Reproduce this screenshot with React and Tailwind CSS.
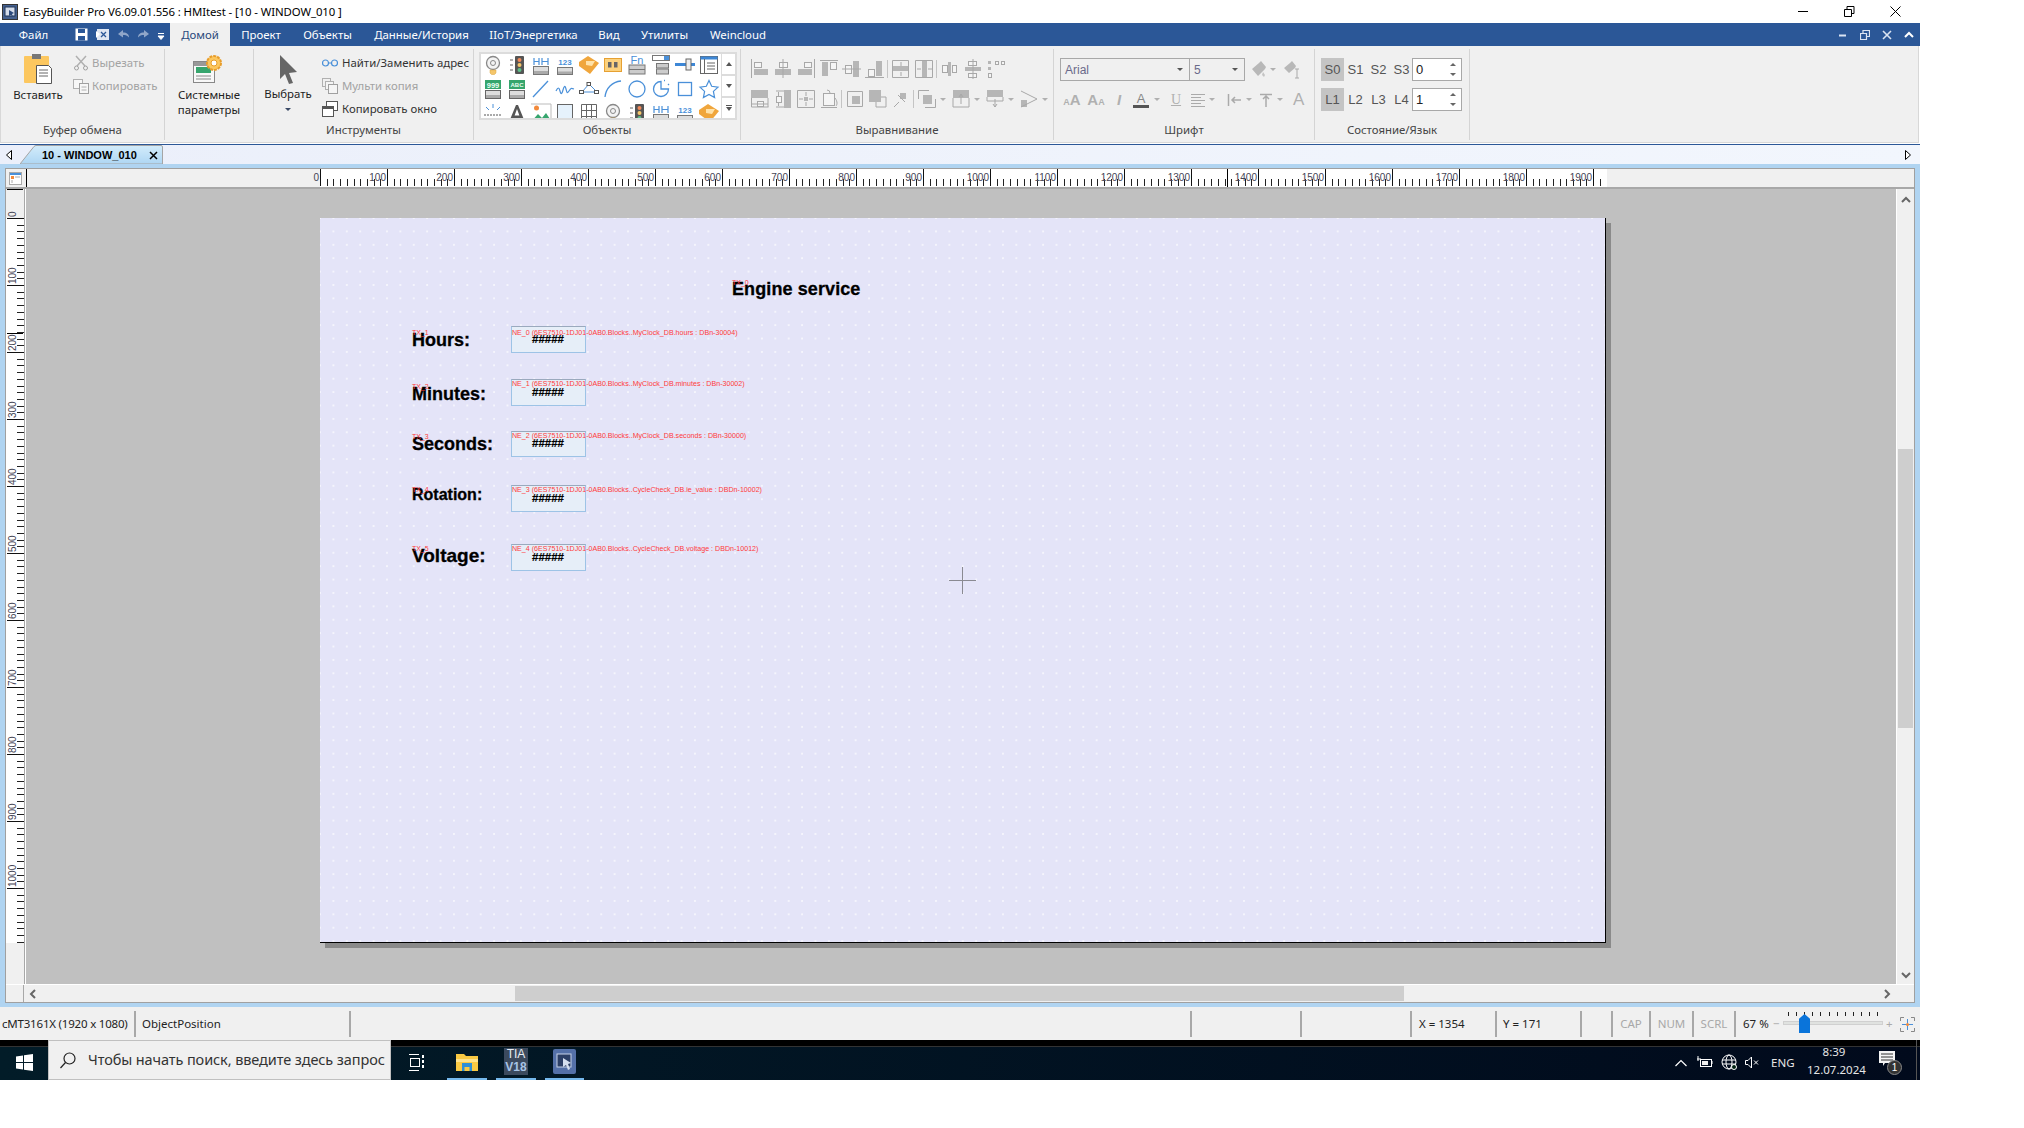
import React from "react";

const UI = "font-['Noto_Sans','Open_Sans',sans-serif]";
const G = "#b6b6b6";
const S = "#a8a8a8";
const B = "#4a90d9";

function Sv({ w = 20, h = 20, vb, className = "", children }) {
  return (
    <svg width={w} height={h} viewBox={vb || `0 0 ${w} ${h}`} className={"shrink-0 " + className} fill="none">
      {children}
    </svg>
  );
}

function Btn({ t, c = "#4a90d9" }) {
  return (
    <>
      <rect x="4.5" y="14.5" width="15" height="7" fill="#ddd" stroke="#777" />
      <rect x="5" y="18.5" width="14" height="2.5" fill="#aaa" />
      <text x="12" y="12" textAnchor="middle" fontSize="8" fontWeight="700" fontFamily="Liberation Sans" fill={c}>{t}</text>
    </>
  );
}
const Ico = {
  bulb: () => (<>
    <circle cx="12" cy="10" r="6.5" fill="#f3f3f3" stroke="#888" strokeWidth="1.3" />
    <circle cx="12" cy="10" r="2.5" stroke="#888" />
    <path d="M9 17h6v3l-1.5 1.5h-3L9 20z" fill="#f5c66b" stroke="#d9a441" strokeWidth=".5" />
  </>),
  light: () => (<>
    <rect x="10" y="3" width="9" height="18" rx="1" fill="#555" />
    <circle cx="14.5" cy="7" r="2" fill="#f28a5a" /><circle cx="14.5" cy="12" r="2" fill="#f5c66b" /><circle cx="14.5" cy="17" r="2" fill="#5fbf8a" />
    <path d="M5 7h3M5 12h3M5 17h3" stroke="#666" />
  </>),
  num: () => (<>
    <path d="M5 5v7M10 5v7M5 8.5h5M13 5v7M19 5v7M13 8.5h6" stroke={B} strokeWidth="1.2" />
    <rect x="4.5" y="13.5" width="15" height="8" fill="#ddd" stroke="#777" /><rect x="5" y="18" width="14" height="3" fill="#aaa" />
  </>),
  n123: () => <Btn t="123" />,
  tag: () => (<>
    <path d="M2 9l9-6 11 7-9 11-11-8z" fill="#f0a63c" /><path d="M9 8l9 0-3 5-6-1z" fill="#ffe2a8" />
  </>),
  yellow: () => (<>
    <rect x="3.5" y="5.5" width="17" height="13" fill="#fcd27e" stroke="#e6a032" />
    <rect x="7" y="9" width="3.5" height="5.5" fill="#666" /><rect x="13" y="9" width="3.5" height="5.5" fill="#666" />
  </>),
  fn: () => (<>
    <text x="12" y="11" textAnchor="middle" fontSize="11" fontFamily="Liberation Sans" fill={B}>Fn</text>
    <rect x="4" y="12" width="16" height="9" fill="#ccc" stroke="#777" /><path d="M4 16.5h16" stroke="#777" />
  </>),
  combo: () => (<>
    <rect x="3.5" y="2.5" width="17" height="5" fill="#fff" stroke="#777" /><rect x="15" y="3" width="5" height="4" fill={B} />
    <rect x="7.5" y="10.5" width="12" height="4.5" fill="#ccc" stroke="#777" /><rect x="7.5" y="16" width="12" height="5" fill="#ccc" stroke="#777" />
  </>),
  slider: () => (<>
    <rect x="2" y="10" width="20" height="3" fill="#3d87d6" /><rect x="13" y="6" width="5" height="11" fill="#eee" stroke="#666" />
  </>),
  table: () => (<>
    <rect x="3.5" y="3.5" width="17" height="17" fill="#fff" stroke="#666" /><rect x="3.5" y="3.5" width="17" height="3" fill="#3d87d6" />
    <path d="M7.5 6v15M10 10h8M10 13h8M10 16h8" stroke="#666" />
  </>),
  g999: () => (<>
    <rect x="4" y="3" width="16" height="9" fill="#36a56d" />
    <text x="12" y="10.5" textAnchor="middle" fontSize="7.5" fontWeight="700" fontFamily="Liberation Sans" fill="#e8fff2">999</text>
    <rect x="4.5" y="13.5" width="15" height="8" fill="#ddd" stroke="#666" /><rect x="5" y="18" width="14" height="3" fill="#aaa" />
  </>),
  gabc: () => (<>
    <rect x="4" y="3" width="16" height="9" fill="#36a56d" />
    <text x="12" y="10" textAnchor="middle" fontSize="6" fontWeight="700" fontFamily="Liberation Sans" fill="#e8fff2">ABC</text>
    <rect x="4.5" y="13.5" width="15" height="8" fill="#ddd" stroke="#666" /><rect x="5" y="18" width="14" height="3" fill="#aaa" />
  </>),
  line: () => <path d="M4 20L19 4" stroke={B} strokeWidth="1.3" />,
  wave: () => <path d="M3 14c2-4 3-4 4 0s2 3 3-1 2-5 3-1 1 5 3 2 2-3 5-2" stroke={B} strokeWidth="1.2" />,
  poly: () => (<>
    <path d="M5 15L12 7l8 8H5" stroke={B} /><rect x="2.5" y="13.5" width="4" height="3" fill="#fff" stroke="#555" /><rect x="10" y="5.5" width="3.5" height="3" fill="#fff" stroke="#555" /><rect x="17.5" y="13.5" width="4" height="3" fill="#fff" stroke="#555" />
  </>),
  arc: () => <path d="M4 20C5 11 11 5 20 4" stroke={B} strokeWidth="1.3" />,
  circle: () => <circle cx="12" cy="12" r="8" stroke={B} strokeWidth="1.3" />,
  pie: () => <path d="M12 4.5a7.5 7.5 0 1 0 7.5 7.5H12zM15 3.5l1 0M19 7l1 1" stroke={B} strokeWidth="1.3" />,
  rect: () => <rect x="5.5" y="5.5" width="13" height="13" stroke={B} strokeWidth="1.3" />,
  star: () => <path d="M12 3.5l2.7 5.8 6.3.8-4.6 4.3 1.2 6.2L12 17.5l-5.6 3.1 1.2-6.2L3 10.1l6.3-.8z" stroke={B} strokeWidth="1.2" />,
  spark: () => (<>
    <path d="M12 3v4M5 6l3 3M19 6l-3 3" stroke={B} /><path d="M3 14h18M4 17v3M8 17v3M12 17v3M16 17v3M20 17v3" stroke="#555" strokeDasharray="2 1" />
  </>),
  A: () => <path d="M4 21L11 4h2l7 17h-3l-1.6-4H8.6L7 21zM9.6 14.500h4.800L12 8z" fill="#555" />,
  pic: () => (<>
    <circle cx="7.500" cy="7" r="2.500" fill="#f28a3c" /><path d="M2 21l7-8 4 4 4-5 6 9z" fill="#36a56d" /><path d="M2 3h20v18" stroke="#bbb" />
  </>),
  pane: () => <rect x="4.500" y="3.500" width="15" height="18" fill="#e6f2fc" stroke="#666" />,
  grid: () => <path d="M4.500 3.500h15v18h-15zM4.500 9.500h15M4.500 15.500h15M9.500 3.500v18M14.500 3.500v18" stroke="#666" />,
};
const gallery = ["bulb","light","num","n123","tag","yellow","fn","combo","slider","table","g999","gabc","line","wave","poly","arc","circle","pie","rect","star","spark","A","pic","pane","grid","bulb","light","num","n123","tag"];

function Al({ f = [], o = [], l = [] }) {
  return (
    <Sv w={20} h={20}>
      {f.map((r, i) => <rect key={i} x={r[0]} y={r[1]} width={r[2]} height={r[3]} fill={G} />)}
      {o.map((r, i) => <rect key={i} x={r[0] + .5} y={r[1] + .5} width={r[2]} height={r[3]} stroke={S} fill="#f5f5f5" />)}
      {l.map((d, i) => <path key={i} d={d} stroke={S} />)}
    </Sv>
  );
}
const VSep = () => <span className="w-px h-[18px] bg-[#c4c4c4] -ml-[1px] shrink-0" />;
const Drop = ({ c = "#b0b0b0" }) => <span className="block w-0 h-0 border-x-[3px] border-x-transparent border-t-[3px] shrink-0" style={{ borderTopColor: c }} />;

function RulerH() {
  const minor = [], major = [];
  for (let i = 0; i < 192; i++) { const x = 295 + i * 6.7; (i % 10 === 0 ? major : minor).push(x); }
  return (
    <svg width="1889" height="18" className="shrink-0" viewBox="0 0 1889 18">
      <rect x="295" y="0" width="1287" height="18" fill="#fff" />
      <path d="M1.500 0v18" stroke="#000" />
      <path d="M1202.500 0v18" stroke="#000" />
      {minor.map((x) => <path key={x} d={`M${Math.round(x) + .5} 10v7`} stroke="#222" />)}
      {major.map((x, i) => (
        <g key={x}>
          <path d={`M${Math.round(x) + .5} 0v17`} stroke="#111" />
          <text x={Math.round(x) - 1} y="12" textAnchor="end" fontSize="10" fontFamily="Liberation Sans" fill="#445">{i * 100}</text>
        </g>
      ))}
    </svg>
  );
}
function RulerV() {
  const minor = [], major = [];
  for (let i = 0; i <= 108; i++) { const y = 29 + i * 6.7; (i % 10 === 0 ? major : minor).push(y); }
  return (
    <svg width="18" height="795" className="shrink-0" viewBox="0 0 18 795">
      <rect x="0" y="29" width="18" height="725" fill="#fff" />
      <path d="M1 0.500h16" stroke="#000" />
      <path d="M1 144.500h16" stroke="#000" />
      {minor.map((y) => <path key={y} d={`M11 ${Math.round(y) + .5}h7`} stroke="#222" />)}
      {major.map((y, i) => (
        <g key={y}>
          <path d={`M1 ${Math.round(y) + .5}h17`} stroke="#111" />
          <text transform={`translate(10 ${Math.round(y) - 1}) rotate(-90)`} fontSize="10" fontFamily="Liberation Sans" fill="#445">{i * 100}</text>
        </g>
      ))}
    </svg>
  );
}

function RibbonLabel({ children }) {
  return <div className="h-[20px] text-[11.4px] leading-[20px] text-center text-[#444]">{children}</div>;
}
function Group({ w, label, children }) {
  return (
    <div className={"flex flex-col shrink-0 border-r border-[#d4d4d4] h-[91px] mt-[3px] " + w}>
      <div className="flex-1 min-h-0">{children}</div>
      <RibbonLabel>{label}</RibbonLabel>
    </div>
  );
}

function StateRow({ items, val, top = "" }) {
  return (
    <div className={"flex items-center h-[23px] " + top}>
      {items.map((t, i) => (
        <span key={t} className={"w-[23px] h-[23px] flex items-center justify-center text-[13px] font-['Liberation_Sans'] text-[#555] " + (i === 0 ? "bg-[#c4c4c4]" : "")}>{t}</span>
      ))}
      <div className="ml-[-1px] w-[50px] h-[23px] border border-[#a8a8a8] bg-white flex items-center pl-[3px] text-[13px] font-['Liberation_Sans'] text-[#222] relative">
        {val}
        <span className="absolute right-[5px] top-[4px] w-0 h-0 border-x-[3px] border-x-transparent border-b-[3px] border-b-[#666]" />
        <span className="absolute right-[5px] bottom-[4px] w-0 h-0 border-x-[3px] border-x-transparent border-t-[3px] border-t-[#666]" />
      </div>
    </div>
  );
}

const rows = [
  { l: "Hours:", lc: "left-[92px] top-[111px] text-[18px]", tx: "TX_1", txc: "top-[111px]", box: "top-[108px] h-[27px]", ne: "top-[111px]", h: "top-[114px]", t: "NE_0 (6ES7510-1DJ01-0AB0.Blocks..MyClock_DB.hours : DBn-30004)" },
  { l: "Minutes:", lc: "left-[92px] top-[165px] text-[18px]", tx: "TX_2", txc: "top-[165px]", box: "top-[161px] h-[27px]", ne: "top-[162px]", h: "top-[167px]", t: "NE_1 (6ES7510-1DJ01-0AB0.Blocks..MyClock_DB.minutes : DBn-30002)" },
  { l: "Seconds:", lc: "left-[92px] top-[215px] text-[18px]", tx: "TX_3", txc: "top-[215px]", box: "top-[213px] h-[26px]", ne: "top-[214px]", h: "top-[218px]", t: "NE_2 (6ES7510-1DJ01-0AB0.Blocks..MyClock_DB.seconds : DBn-30000)" },
  { l: "Rotation:", lc: "left-[92px] top-[266px] text-[16px]", tx: "TX_4", txc: "top-[268px]", box: "top-[267px] h-[27px]", ne: "top-[268px]", h: "top-[273px]", t: "NE_3 (6ES7510-1DJ01-0AB0.Blocks..CycleCheck_DB.ie_value : DBDn-10002)" },
  { l: "Voltage:", lc: "left-[92px] top-[327px] text-[19px]", tx: "TX_5", txc: "top-[327px]", box: "top-[326px] h-[27px]", ne: "top-[327px]", h: "top-[332px]", t: "NE_4 (6ES7510-1DJ01-0AB0.Blocks..CycleCheck_DB.voltage : DBDn-10012)" },
];

export default function App() {
  return (
    <div className={"w-[2024px] h-[1128px] bg-white overflow-hidden " + UI}>
      <div className="w-[1920px] h-[1080px] flex flex-col">
        {/* title bar */}
        <div className="h-[23px] flex items-center bg-white shrink-0">
          <Sv w={16} h={16} className="ml-[2px]">
            <rect x=".5" y=".5" width="15" height="15" fill="#44608f" stroke="#333" />
            <rect x="3" y="3" width="10" height="9" fill="#d4dcea" stroke="#1f3458" />
            <path d="M7 6l5 3-2 1 1 3-2-2-2 1z" fill="#2b4a7d" />
          </Sv>
          <span className="ml-[5px] text-[11.4px] tracking-[-0.1px] text-black whitespace-nowrap">EasyBuilder Pro V6.09.01.556 : HMItest - [10 - WINDOW_010 ]</span>
          <div className="flex-1" />
          <Sv w={11} h={11} className="mr-[35px]"><path d="M0 5.500h10" stroke="#000" /></Sv>
          <Sv w={11} h={11} className="mr-[35px]"><path d="M.5 3.500h7v7h-7zM3 3.500V.5h7v7H7.500" stroke="#000" /></Sv>
          <Sv w={11} h={11} className="mr-[19px]"><path d="M.5.5l10 10M10.500.5l-10 10" stroke="#000" /></Sv>
        </div>

        {/* menu */}
        <div className="h-[23px] bg-[#2b5797] flex items-stretch text-[11.4px] text-white shrink-0">
          <div className="w-[67px] flex items-center justify-center">Файл</div>
          <div className="w-[103px] flex items-center pl-[8px] gap-[8px]">
            <Sv w={13} h={13}><path d="M.5.5h12v12H.5z" fill="#fff" /><rect x="3" y="1" width="7" height="4" fill="#2b5797" /><rect x="3" y="8" width="7" height="4.500" fill="#2b5797" /></Sv>
            <Sv w={13} h={13}><rect x="1" y="1" width="12" height="11" fill="#dfe6f2" /><path d="M5 4l5 5M10 4l-5 5" stroke="#2b5797" strokeWidth="1.300" /><path d="M0 3l4 3-4 4z" fill="#fff" /></Sv>
            <Sv w={13} h={13}><path d="M1 6l5-4v2.500c4 0 6 2 6 5-2-2-3-2.500-6-2.500V9.500z" fill="#8fa6c9" /></Sv>
            <Sv w={13} h={13} className="ml-[-1px]"><path d="M12 6L7 2v2.500c-4 0-6 2-6 5 2-2 3-2.500 6-2.500v2.500z" fill="#8fa6c9" /></Sv>
            <Sv w={8} h={9} className="mt-[3px] -ml-[1px]"><path d="M1 1.500h6M1 4l3 3.500L7 4z" stroke="#fff" fill="#fff" /></Sv>
          </div>
          <div className="w-[60px] bg-[#f0f0f0] text-[#2b4a7d] flex items-center justify-center">Домой</div>
          <div className="w-[62px] flex items-center justify-center">Проект</div>
          <div className="w-[71px] flex items-center justify-center">Объекты</div>
          <div className="w-[117px] flex items-center justify-center">Данные/История</div>
          <div className="w-[107px] flex items-center justify-center">IIoT/Энергетика</div>
          <div className="w-[44px] flex items-center justify-center">Вид</div>
          <div className="w-[67px] flex items-center justify-center">Утилиты</div>
          <div className="w-[80px] flex items-center justify-center">Weincloud</div>
          <div className="flex-1" />
          <div className="flex items-center gap-[12px] pr-[6px]">
            <Sv w={10} h={10}><path d="M1 5.500h7" stroke="#dbe4f2" strokeWidth="2" /></Sv>
            <Sv w={10} h={10}><path d="M.5 3.500h6v6h-6zM3 3V.5h6.500v6H7" stroke="#dbe4f2" strokeWidth="1.200" /></Sv>
            <Sv w={10} h={10}><path d="M1 1l8 8M9 1l-8 8" stroke="#dbe4f2" strokeWidth="1.600" /></Sv>
            <Sv w={10} h={10}><path d="M1 7l4-4 4 4" stroke="#fff" strokeWidth="2" /></Sv>
          </div>
        </div>

        {/* ribbon */}
        <div className="h-[97px] bg-[#f0f0f0] border border-[#d8d8d8] border-t-0 mr-[1px] flex text-[11.4px] shrink-0">
          <Group w="w-[164px]" label="Буфер обмена">
            <div className="flex">
              <div className="w-[74px] flex flex-col items-center pt-[4px]">
                <Sv w={30} h={32}>
                  <rect x="1" y="3" width="25" height="27" rx="1" fill="#fcc75f" />
                  <rect x="9" y="1" width="9" height="5" fill="#777" />
                  <path d="M13.500 12.500h12l3 3v15h-15z" fill="#fff" stroke="#555" />
                  <path d="M16 17h9M16 20h9M16 23h9" stroke="#666" />
                </Sv>
                <span className="mt-[2px] leading-[16px] text-[#222]">Вставить</span>
              </div>
              <div className="flex flex-col pt-[6px] gap-[7px] text-[#a3a3a3] -ml-[2px]">
                <div className="flex items-center h-[16px] gap-[3px]">
                  <Sv w={16} h={16}><path d="M3 1l9 10M13 1L4 11" stroke="#b0b0b0" strokeWidth="1.500" /><circle cx="3.500" cy="13" r="2" stroke="#a0a0a0" /><circle cx="12.500" cy="13" r="2" stroke="#a0a0a0" /></Sv>
                  <span>Вырезать</span>
                </div>
                <div className="flex items-center h-[16px] gap-[3px]">
                  <Sv w={16} h={16}><rect x=".5" y="1.500" width="9" height="9" fill="#f7f7f7" stroke="#b0b0b0" /><rect x="6.500" y="5.500" width="9" height="10" fill="#f7f7f7" stroke="#a0a0a0" /><path d="M8.500 9h5M8.500 12h5" stroke="#b0b0b0" /></Sv>
                  <span>Копировать</span>
                </div>
              </div>
            </div>
          </Group>
          <Group w="w-[89px]" label="">
            <div className="flex flex-col items-center pt-[4px]">
              <Sv w={32} h={32}>
                <rect x=".5" y="8.500" width="21" height="21" fill="#f8f8f8" stroke="#888" />
                <rect x="1" y="9" width="21" height="4" fill="#999" />
                <rect x="3" y="14" width="15" height="6" fill="#36a56d" />
                <path d="M3 23h15M3 26h15" stroke="#888" />
                <circle cx="21" cy="10" r="7" fill="#fcc75f" stroke="#e89d2a" strokeWidth="2" strokeDasharray="3 1" />
                <circle cx="21" cy="10" r="3" fill="#fff" stroke="#e89d2a" />
              </Sv>
              <span className="mt-[2px] leading-[15px] text-center text-[#222]">Системные<br />параметры</span>
            </div>
          </Group>
          <Group w="w-[220px]" label="Инструменты">
            <div className="flex">
              <div className="w-[68px] flex flex-col items-center pt-[5px]">
                <Sv w={20} h={31}><path d="M2 1l17 17-8 1 4 10-4 1-4-10-5 5z" fill="#666" /></Sv>
                <span className="mt-[1px] leading-[16px] text-[#222]">Выбрать</span>
                <span className="mt-[6px]"><Drop c="#3b4a66" /></span>
              </div>
              <div className="flex flex-col pt-[6px] gap-[7px] text-[#333] whitespace-nowrap">
                <div className="flex items-center h-[16px] gap-[4px]">
                  <Sv w={16} h={16}><circle cx="3.500" cy="8" r="3" stroke={B} strokeWidth="1.200" /><circle cx="12.500" cy="8" r="3" stroke={B} strokeWidth="1.200" /><path d="M6.500 8h3" stroke={B} /></Sv>
                  <span>Найти/Заменить адрес</span>
                </div>
                <div className="flex items-center h-[16px] gap-[4px] text-[#a3a3a3]">
                  <Sv w={16} h={16}><rect x=".5" y=".5" width="8" height="8" stroke="#b0b0b0" /><rect x="3.500" y="3.500" width="8" height="8" fill="#f5f5f5" stroke="#b0b0b0" /><rect x="6.500" y="6.500" width="9" height="9" fill="#f5f5f5" stroke="#a0a0a0" /></Sv>
                  <span>Мульти копия</span>
                </div>
                <div className="flex items-center h-[16px] gap-[4px]">
                  <Sv w={16} h={16}><rect x="4.500" y=".5" width="11" height="9" fill="#fff" stroke="#555" /><rect x=".5" y="5.500" width="11" height="10" fill="#fff" stroke="#555" /><path d="M1 7h10" stroke="#555" strokeWidth="2" /></Sv>
                  <span>Копировать окно</span>
                </div>
              </div>
            </div>
          </Group>
          <Group w="w-[267px]" label="Объекты">
            <div className="flex ml-[5px] mt-[3px] w-[258px] h-[68px] border-2 border-[#dcdcdc] bg-white overflow-hidden">
              <div className="w-[240px] grid grid-cols-10 auto-rows-[24px] content-start -mt-[1px]">
                {gallery.map((k, i) => { const C = Ico[k]; return <Sv key={i} w={24} h={24}><C /></Sv>; })}
              </div>
              <div className="flex-1 flex flex-col border-l border-[#dcdcdc] bg-white">
                <div className="flex-1 flex items-center justify-center border-b-2 border-[#dcdcdc]"><span className="w-0 h-0 border-x-[3px] border-x-transparent border-b-[4px] border-b-[#555]" /></div>
                <div className="flex-1 flex items-center justify-center border-b-2 border-[#dcdcdc]"><span className="w-0 h-0 border-x-[3px] border-x-transparent border-t-[4px] border-t-[#555]" /></div>
                <div className="flex-1 flex flex-col items-center justify-center gap-[1px]"><span className="w-[6px] h-px bg-[#555]" /><span className="w-0 h-0 border-x-[3px] border-x-transparent border-t-[4px] border-t-[#555]" /></div>
              </div>
            </div>
          </Group>
          <Group w="w-[313px]" label="Выравнивание">
            <div className="pt-[10px] pl-[9px] flex flex-col gap-[10px]">
              <div className="flex items-center h-[20px] gap-[3px]">
                <Al f={[[4,10,14,6]]} o={[[4,3,7,5]]} l={["M1.500 0v19"]} />
                <Al f={[[2,10,16,6]]} o={[[6,3,8,5]]} l={["M10 0v19"]} />
                <Al f={[[2,10,14,6]]} o={[[8,3,7,5]]} l={["M18.500 0v19"]} />
                <Al f={[[3,3,6,14]]} o={[[11,3,6,7]]} l={["M1 1.500h18"]} />
                <Al f={[[11,2,6,16]]} o={[[3,6,6,8]]} l={["M0 10h19"]} />
                <Al f={[[11,2,6,15]]} o={[[3,10,6,7]]} l={["M0 18.500h19"]} />
                <VSep />
                <Al f={[[1,7,17,5]]} o={[]} l={["M1.500 1.500h16v17h-16zM10 3v4M10 13v4"]} />
                <Al f={[[8,1,5,18]]} o={[]} l={["M1.500 1.500h17v17h-17zM3 10h4M14 10h4"]} />
                <VSep />
                <Al f={[[8,3,3,14]]} o={[[2,6,5,7],[12,6,4,7]]} />
                <Al f={[[2,8,16,4]]} o={[[5,2,8,4],[5,14,8,4]]} l={["M10 0v20"]} />
                <Al f={[[2,2,3,3],[2,8,3,3]]} o={[[2,14,3,4],[9,2,3,3],[15,2,3,3]]} />
              </div>
              <div className="flex items-center h-[20px] gap-[3px]">
                <Al f={[[1,1,17,8]]} l={["M1.500 9v9M18 9v9M1.500 18h17","M2 15h16"]} o={[[7,12,6,5]]} />
                <Al f={[[11,1,7,18]]} o={[[3,7,5,6]]} l={["M3 2h8M3 18h8M5.500 3v4M5.500 13v4"]} />
                <Al f={[[8,8,4,4]]} l={["M1.500 1.500h17v17h-17zM10 3v4M10 13v4M3 10h4M13 10h4"]} />
                <Al o={[[4,4,11,12]]} l={["M8 1a3 3 0 0 1 3 3M16 9c3 4 2 7 1 8M2 18.500h16"]} />
                <VSep />
                <Al f={[[7,7,8,8]]} l={["M2.500 2.500h15v15h-15z"]} />
                <Al f={[[1,1,12,12]]} l={["M13 8h5v10H8v-5"]} />
                <Al f={[[9,4,6,6]]} l={["M3 18l5-5M7 6l7 7"]} />
                <VSep />
                <div className="flex items-center gap-[3px]"><Al f={[[6,6,9,9]]} l={["M1.500 10V1.500H12M18.500 10v8.500H8"]} /><Drop /></div>
                <div className="flex items-center gap-[3px] ml-[2px]"><Al f={[[2,1,16,8]]} l={["M2 9v9h16V9M10 6v9M8 8l2-3 2 3"]} /><Drop /></div>
                <div className="flex items-center gap-[3px] ml-[2px]"><Al f={[[2,1,16,7]]} l={["M2 8v4h16V8M10 10v8M8 15l2 3 2-3"]} /><Drop /></div>
                <div className="flex items-center gap-[3px] ml-[2px]"><Al f={[[2,11,6,7]]} l={["M2 2l16 8M2 18l16-8"]} /><Drop /></div>
              </div>
            </div>
          </Group>
          <Group w="w-[261px]" label="Шрифт">
            <div className="pl-[6px] pt-[9px] flex flex-col gap-[7px] font-['Liberation_Sans']">
              <div className="flex items-center h-[23px]">
                <div className="w-[130px] h-[23px] border border-[#a8a8a8] flex items-center justify-between pl-[4px] pr-[6px] text-[12px] text-[#6a6a8a]">Arial<Drop c="#555" /></div>
                <div className="w-[55px] h-[23px] border border-l-0 border-[#a8a8a8] flex items-center justify-between pl-[4px] pr-[6px] text-[12px] text-[#6a6a8a]">5<Drop c="#555" /></div>
                <Sv w={18} h={20} className="ml-[5px]"><path d="M2 9l7-6 2-2 5 6-1 2-7 7z" fill="#b8b8b8" /><path d="M13 12l2 3-1 2-2-2z" fill="#c4c4c4" /></Sv>
                <span className="ml-[2px] flex"><Drop /></span>
                <Sv w={20} h={20} className="ml-[7px]"><path d="M1 8l6-5 2-2 4 5-1 2-6 5z" fill="#b8b8b8" /><path d="M14 9v9M12 9h4M12 18h4" stroke="#aaa" /></Sv>
              </div>
              <div className="flex items-center h-[23px] text-[#b0b0b0]">
                <span className="w-[24px] text-center text-[15px] leading-none font-bold"><span className="text-[9px]">A</span>A</span>
                <span className="w-[24px] text-center text-[15px] leading-none font-bold">A<span className="text-[9px]">A</span></span>
                <span className="w-[22px] text-center text-[15px] leading-none font-bold italic">I</span>
                <span className="w-[22px] flex flex-col items-center text-[13px] leading-[13px] text-[#888]">A<span className="w-[16px] h-[3px] bg-[#555]" /></span>
                <span className="mx-[2px] flex"><Drop /></span>
                <span className="w-[28px] text-center text-[14px] leading-none underline font-['Liberation_Serif']">U</span>
                <Sv w={16} h={14}><path d="M1 1.500h14M1 4.500h10M1 7.500h14M1 10.500h10M1 13.500h14" stroke="#aaa" /></Sv>
                <span className="mx-[3px] flex"><Drop /></span>
                <Sv w={16} h={14} className="ml-[9px]"><path d="M1.500 1v12M14 7H5M8 4L5 7l3 3" stroke="#aaa" strokeWidth="1.500" /></Sv>
                <span className="mx-[3px] flex"><Drop /></span>
                <Sv w={16} h={14} className="ml-[3px]"><path d="M2 1.500h12M8 14V4M5 6l3-3 3 3" stroke="#aaa" strokeWidth="1.500" /></Sv>
                <span className="mx-[3px] flex"><Drop /></span>
                <span className="ml-[7px] text-[17px] leading-none">A</span>
              </div>
            </div>
          </Group>
          <Group w="w-[155px]" label="Состояние/Язык">
            <div className="pl-[6px] pt-[9px] flex flex-col gap-[7px]">
              <StateRow items={["S0", "S1", "S2", "S3"]} val="0" />
              <StateRow items={["L1", "L2", "L3", "L4"]} val="1" />
            </div>
          </Group>
        </div>

        <div className="h-[1px] bg-white shrink-0" />
        {/* tab strip */}
        <div className="h-[20px] border-t border-[#2b5797] bg-[linear-gradient(to_right,#ebeffa,#f2f6fd)] flex items-stretch shrink-0">
          <div className="w-[20px] flex items-center pl-[6px]"><Sv w={6} h={10}><path d="M5.500 .5v9L.5 5z" fill="#fff" stroke="#000" /></Sv></div>
          <div className="w-[143px] relative flex items-center pl-[22px] pt-[1px]">
            <svg width="143" height="19" className="absolute inset-0" viewBox="0 0 143 19">
              <defs><linearGradient id="tb" x1="0" x2="0" y1="0" y2="1"><stop offset="0" stopColor="#d3ecfb" /><stop offset="1" stopColor="#aed6f3" /></linearGradient></defs>
              <path d="M0 19L14 1.500Q15 .5 16 .5h125a1.500 1.500 0 0 1 1.500 1.500v17z" fill="url(#tb)" stroke="#a5a5a5" />
            </svg>
            <span className="relative text-[11px] font-bold font-['Liberation_Sans'] text-black whitespace-nowrap">10 - WINDOW_010</span>
            <Sv w={9} h={9} className="relative ml-[12px]"><path d="M1 1l7 7M8 1l-7 7" stroke="#000" strokeWidth="1.500" /></Sv>
          </div>
          <div className="flex-1" />
          <div className="w-[15px] flex items-center"><Sv w={6} h={10}><path d="M.5 .5v9L5.500 5z" fill="#fff" stroke="#000" /></Sv></div>
        </div>

        {/* document frame */}
        <div className="h-[843px] bg-[#b0d4f1] px-[5px] py-[4px] shrink-0">
          <div className="h-[835px] border border-[#a0a0a0] bg-[#f0f0f0] flex flex-col">
            <div className="h-[20px] flex border-b-2 border-[#a8a8a8] shrink-0">
              <div className="w-[19px] flex items-center justify-center shrink-0">
                <Sv w={13} h={13}><rect x=".5" y=".5" width="12" height="12" fill="#fff" stroke="#aaa" /><rect x="1" y="1" width="11" height="2" fill="#4a90d9" /><rect x="2" y="4" width="3" height="3" fill="#f28a3c" /><path d="M6 5h5M3 8v3" stroke="#aaa" /></Sv>
              </div>
              <RulerH />
            </div>
            <div className="h-[795px] flex shrink-0">
              <div className="w-[18px] shrink-0 overflow-hidden"><RulerV /></div>
              <div className="w-[1px] bg-[#a8a8a8] shrink-0" />
              <div className="w-[1px] bg-white shrink-0" />
              <div className="w-[1870px] h-[795px] bg-[#c0c0c0] overflow-hidden shrink-0">
                <div className="ml-[294px] mt-[29px] w-[1286px] h-[725px] relative bg-[#e4e4f8] bg-[radial-gradient(circle,#ffffff_0.6px,transparent_0.8px)] bg-[length:13.4px_13.4px] bg-[position:-6.7px_-6.7px] border-r border-b border-black shadow-[5px_5px_0_#8a8a8a] font-['Liberation_Sans']">
                  <span className="absolute left-[412px] top-[60px] text-[18px] leading-[22px] font-bold text-black whitespace-nowrap tracking-[0.1px] [-webkit-text-stroke:0.3px_black]">Engine service</span>
                  <span className="absolute left-[412px] top-[61px] text-[7px] leading-[8px] text-[#ff3b3b]">TX_0</span>
                  {rows.map((r) => (
                    <React.Fragment key={r.l}>
                      <span className={"absolute leading-[22px] font-bold text-black whitespace-nowrap [-webkit-text-stroke:0.3px_black] " + r.lc}>{r.l}</span>
                      <span className={"absolute left-[92px] text-[7px] leading-[8px] text-[#ff3b3b] " + r.txc}>{r.tx}</span>
                      <div className={"absolute left-[191px] w-[75px] bg-[#e6eef8] border border-[#9dc3e6] border-t-[#9aa9bd] " + r.box} />
                      <span className={"absolute left-[212px] text-[11.5px] leading-[14px] font-bold text-black whitespace-nowrap [-webkit-text-stroke:0.2px_black] " + r.h}>#####</span>
                      <span className={"absolute left-[192px] text-[7.1px] leading-[8px] text-[#ff3b3b] whitespace-nowrap " + r.ne}>{r.t}</span>
                    </React.Fragment>
                  ))}
                  <Sv w={27} h={27} className="absolute left-[629px] top-[349px]"><path d="M13.500 0v27M0 13.500h27" stroke="#8a8a92" /></Sv>
                </div>
              </div>
              <div className="flex-1 flex flex-col items-center border-l border-white">
                <Sv w={10} h={10} className="mt-[6px]"><path d="M1 7l4-4 4 4" stroke="#666" strokeWidth="2" /></Sv>
                <div className="w-[15px] h-[279px] bg-[#cecece] mt-[244px]" />
                <div className="flex-1" />
                <Sv w={10} h={10} className="mb-[4px]"><path d="M1 3l4 4 4-4" stroke="#666" strokeWidth="2" /></Sv>
              </div>
            </div>
            <div className="h-[18px] flex border-t border-white shrink-0">
              <div className="w-[18px] border-r border-[#a8a8a8] shrink-0 h-[17px]" />
              <div className="flex-1 flex items-center relative">
                <Sv w={10} h={10} className="ml-[4px]"><path d="M7 1L3 5l4 4" stroke="#666" strokeWidth="2" /></Sv>
                <div className="w-[889px] h-[15px] bg-[#cecece] ml-[477px]" />
                <div className="flex-1" />
                <Sv w={10} h={10} className="mr-[22px]"><path d="M3 1l4 4-4 4" stroke="#666" strokeWidth="2" /></Sv>
              </div>
            </div>
          </div>
        </div>

        {/* status bar */}
        <div className="h-[33px] bg-[#f0f0f0] flex items-center pt-[1px] text-[11.500px] text-[#222] shrink-0 whitespace-nowrap">
          <div className="w-[134px] pl-[2px] tracking-[-0.2px]">cMT3161X (1920 x 1080)</div>
          <div className="w-[2px] h-[26px] bg-[#a8a8a8]" />
          <div className="w-[213px] pl-[6px]">ObjectPosition</div>
          <div className="w-[2px] h-[26px] bg-[#a8a8a8]" />
          <div className="w-[839px]" />
          <div className="w-[2px] h-[26px] bg-[#a8a8a8]" />
          <div className="w-[108px]" />
          <div className="w-[2px] h-[26px] bg-[#a8a8a8]" />
          <div className="w-[108px]" />
          <div className="w-[2px] h-[26px] bg-[#a8a8a8]" />
          <div className="w-[83px] pl-[7px]">X = 1354</div>
          <div className="w-[2px] h-[26px] bg-[#a8a8a8]" />
          <div className="w-[83px] pl-[6px]">Y = 171</div>
          <div className="w-[2px] h-[26px] bg-[#a8a8a8]" />
          <div className="w-[29px]" />
          <div className="w-[2px] h-[26px] bg-[#a8a8a8]" />
          <div className="w-[36px] text-center text-[#a8a8a8]">CAP</div>
          <div className="w-[2px] h-[26px] bg-[#a8a8a8]" />
          <div className="w-[41px] text-center text-[#a8a8a8]">NUM</div>
          <div className="w-[2px] h-[26px] bg-[#a8a8a8]" />
          <div className="w-[40px] text-center text-[#a8a8a8]">SCRL</div>
          <div className="w-[2px] h-[26px] bg-[#a8a8a8]" />
          <div className="w-[36px] pl-[7px]">67 %</div>
          <span className="ml-[1px] text-[#aaa] w-[10px]">−</span>
          <div className="w-[100px] h-[22px] relative shrink-0">
            <div className="absolute left-[5px] right-[4px] top-[-1px] h-[4px] bg-[repeating-linear-gradient(to_right,#222_0,#222_1px,transparent_1px,transparent_8.100px)]" />
            <div className="absolute left-0 right-0 top-[8px] h-[4px] bg-[#e0e2e0] border border-[#d0d0d0]" />
            <div className="absolute left-[16px] top-[1px] w-[11px] h-[19px] bg-[#0a74da] [clip-path:polygon(50%_0,100%_25%,100%_100%,0_100%,0_25%)]" />
          </div>
          <span className="ml-[3px] text-[#aaa] w-[11px]">+</span>
          <Sv w={15} h={15} className="ml-[3px]"><path d="M.5 4V.5H4M11 .5h3.500V4M14.500 11v3.500H11M4 14.500H.5V11" stroke="#888" /><path d="M7.500 2v11M2 7.500h11" stroke="#4a90d9" /><circle cx="7.500" cy="7.500" r="1.500" fill="#f28a3c" /></Sv>
        </div>

        {/* taskbar */}
        <div className="h-[40px] relative flex items-stretch bg-[linear-gradient(to_right,#021c28,#010a1c)] shrink-0 text-white">
          <div className="absolute inset-x-0 top-0 h-[7px] bg-black border-b border-[#333]" />
          <div className="relative w-[48px] flex items-center justify-center pt-[4px]">
            <Sv w={17} h={17}><path d="M0 2.500l7-1v6.500H0zM8 1.300L17 0v8H8zM0 9h7v6.500l-7-1zM8 9h9v8l-9-1.300z" fill="#fff" /></Sv>
          </div>
          <div className="relative w-[343px] bg-[#f0f0f0] border border-[#c0c0c0] flex items-center text-[#333] text-[14.500px]">
            <Sv w={16} h={17} className="ml-[11px]"><circle cx="9.500" cy="6.500" r="5.500" stroke="#222" strokeWidth="1.200" /><path d="M5.500 10.500L.5 16" stroke="#222" strokeWidth="1.200" /></Sv>
            <span className="ml-[12px] whitespace-nowrap tracking-[-0.1px]">Чтобы начать поиск, введите здесь запрос</span>
          </div>
          <div className="relative w-[56px] flex items-center justify-center pt-[5px]">
            <Sv w={17} h={17} className="mr-[6px]"><path d="M1 .5h10M1 16.500h10" stroke="#fff" /><rect x="2.500" y="4.500" width="9" height="8" stroke="#fff" /><path d="M14 1h2v3h-2zM14 6h2v3h-2zM14 11h2v3h-2z" fill="#fff" /></Sv>
          </div>
          <div className="relative w-[40px] flex items-center justify-center pt-[4px] border-b-2 border-[#76b9ed]">
            <Sv w={22} h={20}><path d="M0 3h8l2 2h12v15H0z" fill="#f9c943" /><rect x="0" y="8" width="22" height="3" fill="#ffe28a" /><rect x="6" y="12" width="10" height="8" fill="#2d8fd6" /><rect x="8.500" y="16" width="5" height="4" fill="#f9c943" /></Sv>
          </div>
          <div className="relative w-[9px]" />
          <div className="relative w-[40px] flex items-center justify-center border-b-2 border-[#76b9ed] pt-[4px]">
            <div className="w-[24px] h-[27px] bg-[#3b4a5e] text-[12px] leading-[13px] text-center font-['Liberation_Sans']"><div className="text-[#e8eef5]">TIA</div><div className="font-bold text-[#a8c4e6]">V18</div></div>
          </div>
          <div className="relative w-[9px]" />
          <div className="relative w-[39px] flex items-center justify-center border-b-2 border-[#76b9ed] pt-[4px]">
            <Sv w={23} h={25}><rect width="23" height="25" rx="2" fill="#5470a8" /><rect x="4" y="5" width="14" height="13" fill="#2c3f66" stroke="#c5d2e8" /><path d="M10 9l8 5-3 1 2 5-2 1-2-5-3 2z" fill="#d6e0f0" /></Sv>
          </div>
          <div className="flex-1" />
          <div className="relative flex items-center pt-[5px] text-[11.500px] text-[#e6e6e6]">
            <Sv w={12} h={8}><path d="M.5 7L6 1.500 11.500 7" stroke="#fff" strokeWidth="1.200" /></Sv>
            <Sv w={16} h={13} className="ml-[10px]"><rect x="3.500" y="3.500" width="11" height="7" stroke="#fff" /><rect x="5" y="5" width="6" height="4" fill="#eee" /><path d="M15 5v3M0 3h4M1 0v5" stroke="#fff" /></Sv>
            <Sv w={16} h={17} className="ml-[8px]"><circle cx="8" cy="8" r="7" stroke="#fff" /><ellipse cx="8" cy="8" rx="3" ry="7" stroke="#fff" /><path d="M1 6h14M1 10h14" stroke="#fff" /><circle cx="13" cy="13" r="2.500" fill="#021" stroke="#fff" /></Sv>
            <Sv w={14} h={13} className="ml-[8px]"><path d="M.5 4.500h2.500l3.500-3.500v11L3 8.500H.5zM9 4.500l4 4M13 4.500l-4 4" stroke="#fff" /></Sv>
            <span className="ml-[12px] w-[36px]">ENG</span>
            <div className="w-[54px] -mt-[3px] text-center leading-[18px]">8:39<br />12.07.2024</div>
            <div className="ml-[18px] mr-[18px] relative w-[23px] h-[24px]">
              <Sv w={16} h={15}><path d="M0 0h16v12H6l-2 3v-3H0z" fill="#f5f5f5" /><path d="M2 3h12M2 6h12M2 9h12" stroke="#333" /></Sv>
              <span className="absolute right-0 bottom-0 w-[15px] h-[15px] rounded-full bg-[#333] border border-[#888] text-[10px] leading-[13px] text-center font-['Liberation_Sans'] text-white">1</span>
            </div>
            <div className="w-[1px] h-[40px] bg-[#555] absolute right-[3px] top-0" />
          </div>
        </div>
      </div>
    </div>
  );
}
